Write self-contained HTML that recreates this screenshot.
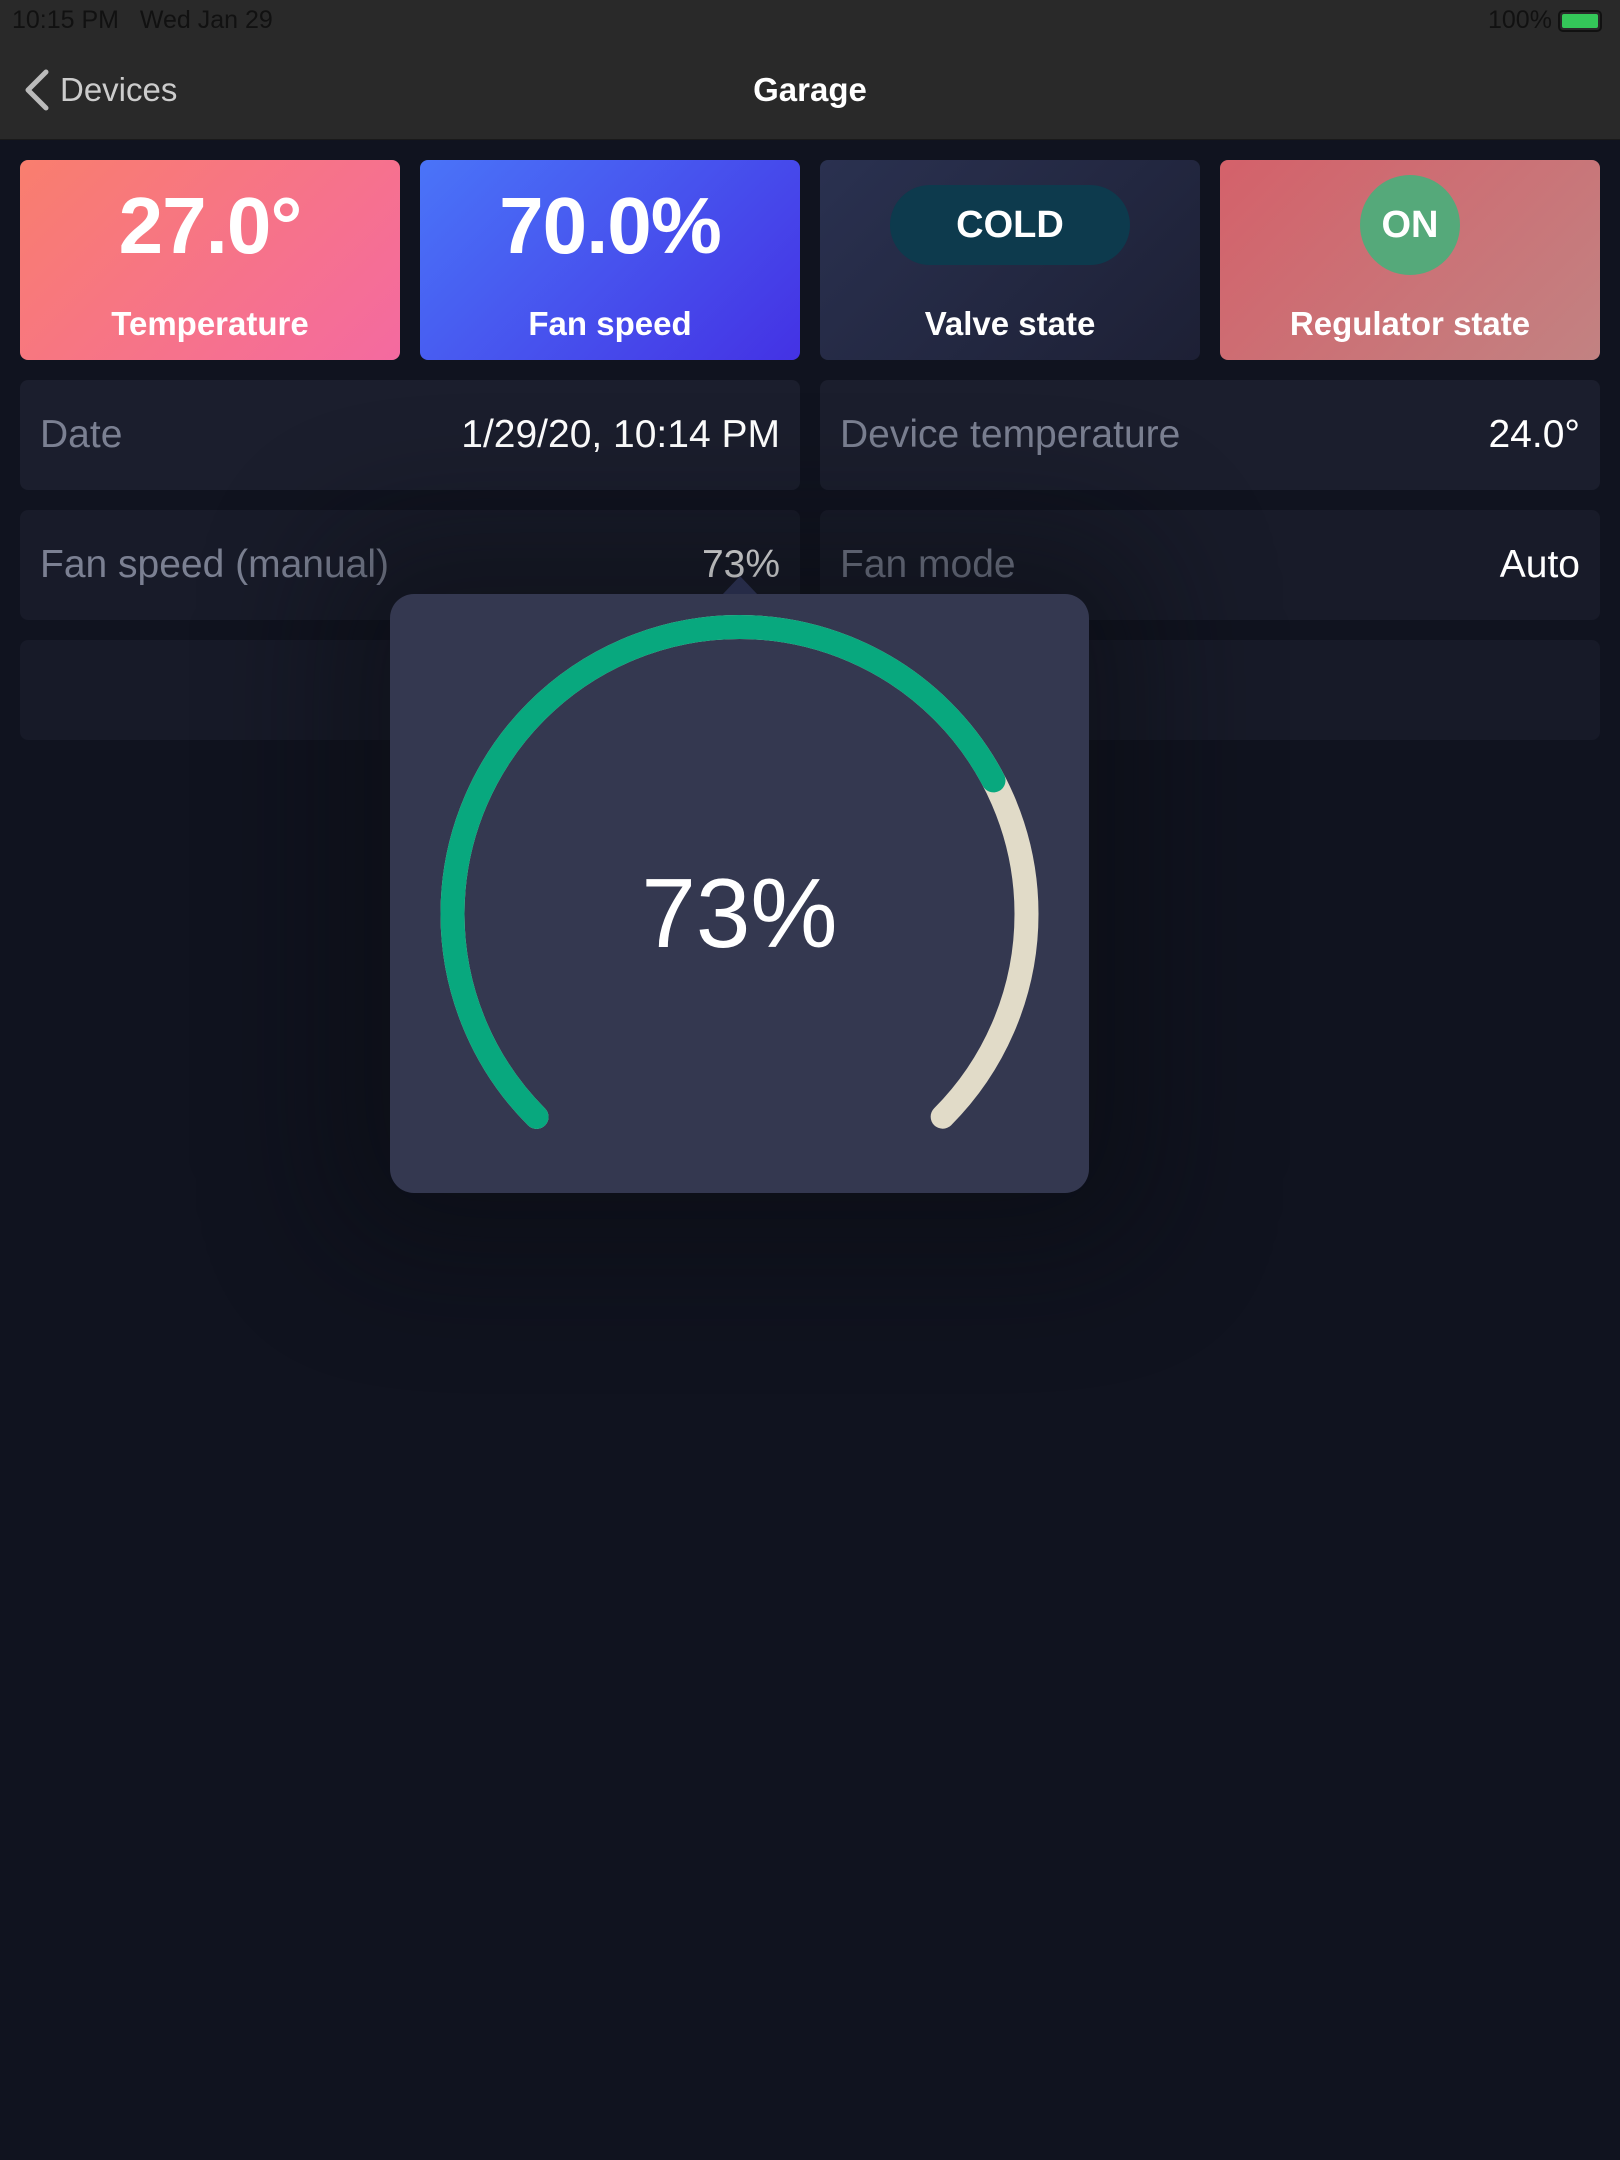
<!DOCTYPE html>
<html><head><meta charset="utf-8"><style>
*{margin:0;padding:0;box-sizing:border-box}
body{width:1620px;height:2160px;background:#10131f;font-family:"Liberation Sans",sans-serif;position:relative;overflow:hidden;color:#fff}
.top{position:absolute;left:0;top:0;width:1620px;height:140px;background:#292929;border-bottom:1px solid #1a1a1a}
.sb{position:absolute;top:6px;font-size:25px;color:#111;}
.nav{position:absolute;top:71px;font-size:33px}
.card{position:absolute;top:160px;width:380px;height:200px;border-radius:8px;text-align:center}
.big{position:absolute;left:0;right:0;top:20px;font-size:80px;font-weight:bold;letter-spacing:-1px}
.lab{position:absolute;left:0;right:0;top:145px;font-size:33px;font-weight:bold}
.row{position:absolute;height:110px;border-radius:8px;background:#1b1e2d}
.row .l{position:absolute;left:20px;top:33px;font-size:39px;color:#7b8092}
.row .r{position:absolute;right:20px;top:33px;font-size:39px;color:#fff}
</style></head><body>
<div class="top">
<div class="sb" style="left:12px">10:15 PM&nbsp;&nbsp;&nbsp;Wed Jan 29</div>
<div class="sb" style="left:1488px">100%</div>
<div style="position:absolute;left:1558px;top:10px;width:44px;height:22px;border:2px solid #111;border-radius:5px;padding:2px"><div style="width:100%;height:100%;background:#34c759;border-radius:2px"></div></div>
<svg style="position:absolute;left:22px;top:68px" width="30" height="44"><path d="M24 4 L6 22 L24 40" stroke="#bbb" stroke-width="5" fill="none" stroke-linecap="round" stroke-linejoin="round"/></svg>
<div class="nav" style="left:60px;color:#ccc">Devices</div>
<div class="nav" style="left:0;width:1620px;text-align:center;font-weight:bold">Garage</div>
</div>

<div class="card" style="left:20px;background:linear-gradient(135deg,#f97e6e,#f46aa0)"><div class="big">27.0°</div><div class="lab">Temperature</div></div>
<div class="card" style="left:420px;background:linear-gradient(135deg,#4a74f8,#4432e4)"><div class="big">70.0%</div><div class="lab">Fan speed</div></div>
<div class="card" style="left:820px;background:linear-gradient(135deg,#2a3150,#1d2035)">
<div style="position:absolute;left:70px;top:25px;width:240px;height:80px;border-radius:40px;background:#0d3a4d;font-size:38px;font-weight:bold;line-height:80px">COLD</div>
<div class="lab">Valve state</div></div>
<div class="card" style="left:1220px;background:linear-gradient(135deg,#d4616a,#c28282)">
<div style="position:absolute;left:140px;top:15px;width:100px;height:100px;border-radius:50px;background:#55a97a;font-size:38px;font-weight:bold;line-height:100px">ON</div>
<div class="lab">Regulator state</div></div>

<div class="row" style="left:20px;top:380px;width:780px"><div class="l">Date</div><div class="r">1/29/20, 10:14 PM</div></div>
<div class="row" style="left:820px;top:380px;width:780px"><div class="l">Device temperature</div><div class="r">24.0°</div></div>
<div class="row" style="left:20px;top:510px;width:780px;background:#181b29"><div class="l">Fan speed (manual)</div><div class="r">73%</div></div>
<div class="row" style="left:820px;top:510px;width:780px;background:#181b29"><div class="l">Fan mode</div><div class="r">Auto</div></div>
<div class="row" style="left:20px;top:640px;width:1580px;height:100px;background:#171a28"></div>

<div style="position:absolute;left:390px;top:594px;width:699px;height:599px;border-radius:24px;box-shadow:0 0 200px 60px rgba(8,10,16,0.45)"></div>
<svg style="position:absolute;left:700px;top:570px" width="80" height="26"><path d="M22 25 L40 6 L58 25 Z" fill="#262b47"/></svg>
<div style="position:absolute;left:390px;top:594px;width:699px;height:599px;border-radius:24px;background:#343850"></div>
<svg style="position:absolute;left:0;top:0" width="1620" height="1300">
<g transform="rotate(135 739.5 914)">
<circle cx="739.5" cy="914" r="287" fill="none" stroke="#e1dbc8" stroke-width="24" stroke-linecap="round" stroke-dasharray="1352 3000"/>
<circle cx="739.5" cy="914" r="287" fill="none" stroke="#08a87e" stroke-width="24" stroke-linecap="round" stroke-dasharray="988 3000"/>
</g>
</svg>
<div style="position:absolute;left:390px;width:699px;top:855px;text-align:center;font-size:98px;line-height:116px;color:#fff">73%</div>
</body></html>
